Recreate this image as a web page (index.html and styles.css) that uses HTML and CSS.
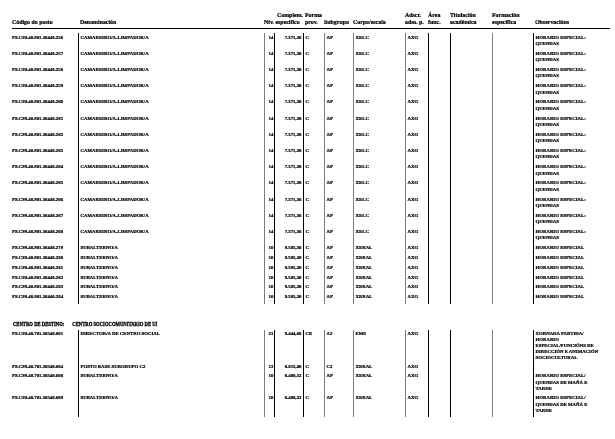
FILE: index.html
```html
<!DOCTYPE html>
<html lang="gl">
<head>
<meta charset="utf-8">
<title>Relación de postos</title>
<link rel="stylesheet" href="styles.css">
</head>
<body>
<div class="page">
<table class="rpt">
<colgroup>
<col class="c1"><col class="c2"><col class="c3"><col class="c4"><col class="c5"><col class="c6"><col class="c7"><col class="c8"><col class="c9"><col class="c10"><col class="c11"><col class="c12">
</colgroup>
<thead>
<tr class="hd">
<th>Código do posto</th>
<th class="pl">Denominación</th>
<th colspan="2" class="hniv"><span class="hcomp">Complem.</span><br>Nív. específico</th>
<th class="pl">Forma<br>prov.</th>
<th>Subgrupo</th>
<th>Corpo/escala</th>
<th>Adscr.<br>adm. p.</th>
<th>Área<br>func.</th>
<th>Titulación<br>académica</th>
<th>Formación<br>específica</th>
<th class="pl">Observacións</th>
</tr>
<tr class="sp"><td colspan="12"></td></tr>
</thead>
<tbody>
<tr><td class="cod">PS.C99.40.901.36440.256</td><td class="den">CAMAREIRO/A-LIMPADOR/A</td><td class="niv">14</td><td class="cmp">7.371,36</td><td class="frm">C</td><td class="sub">AP</td><td class="cor">XELC</td><td class="ads">AXG</td><td class="are"></td><td class="tit"></td><td class="fes"></td><td class="obs">HORARIO ESPECIAL:<br>QUENDAS</td></tr>
<tr><td class="cod">PS.C99.40.901.36440.257</td><td class="den">CAMAREIRO/A-LIMPADOR/A</td><td class="niv">14</td><td class="cmp">7.371,36</td><td class="frm">C</td><td class="sub">AP</td><td class="cor">XELC</td><td class="ads">AXG</td><td class="are"></td><td class="tit"></td><td class="fes"></td><td class="obs">HORARIO ESPECIAL:<br>QUENDAS</td></tr>
<tr><td class="cod">PS.C99.40.901.36440.258</td><td class="den">CAMAREIRO/A-LIMPADOR/A</td><td class="niv">14</td><td class="cmp">7.371,36</td><td class="frm">C</td><td class="sub">AP</td><td class="cor">XELC</td><td class="ads">AXG</td><td class="are"></td><td class="tit"></td><td class="fes"></td><td class="obs">HORARIO ESPECIAL:<br>QUENDAS</td></tr>
<tr><td class="cod">PS.C99.40.901.36440.259</td><td class="den">CAMAREIRO/A-LIMPADOR/A</td><td class="niv">14</td><td class="cmp">7.371,36</td><td class="frm">C</td><td class="sub">AP</td><td class="cor">XELC</td><td class="ads">AXG</td><td class="are"></td><td class="tit"></td><td class="fes"></td><td class="obs">HORARIO ESPECIAL:<br>QUENDAS</td></tr>
<tr><td class="cod">PS.C99.40.901.36440.260</td><td class="den">CAMAREIRO/A-LIMPADOR/A</td><td class="niv">14</td><td class="cmp">7.371,36</td><td class="frm">C</td><td class="sub">AP</td><td class="cor">XELC</td><td class="ads">AXG</td><td class="are"></td><td class="tit"></td><td class="fes"></td><td class="obs">HORARIO ESPECIAL:<br>QUENDAS</td></tr>
<tr><td class="cod">PS.C99.40.901.36440.261</td><td class="den">CAMAREIRO/A-LIMPADOR/A</td><td class="niv">14</td><td class="cmp">7.371,36</td><td class="frm">C</td><td class="sub">AP</td><td class="cor">XELC</td><td class="ads">AXG</td><td class="are"></td><td class="tit"></td><td class="fes"></td><td class="obs">HORARIO ESPECIAL:<br>QUENDAS</td></tr>
<tr><td class="cod">PS.C99.40.901.36440.262</td><td class="den">CAMAREIRO/A-LIMPADOR/A</td><td class="niv">14</td><td class="cmp">7.371,36</td><td class="frm">C</td><td class="sub">AP</td><td class="cor">XELC</td><td class="ads">AXG</td><td class="are"></td><td class="tit"></td><td class="fes"></td><td class="obs">HORARIO ESPECIAL:<br>QUENDAS</td></tr>
<tr><td class="cod">PS.C99.40.901.36440.263</td><td class="den">CAMAREIRO/A-LIMPADOR/A</td><td class="niv">14</td><td class="cmp">7.371,36</td><td class="frm">C</td><td class="sub">AP</td><td class="cor">XELC</td><td class="ads">AXG</td><td class="are"></td><td class="tit"></td><td class="fes"></td><td class="obs">HORARIO ESPECIAL:<br>QUENDAS</td></tr>
<tr><td class="cod">PS.C99.40.901.36440.264</td><td class="den">CAMAREIRO/A-LIMPADOR/A</td><td class="niv">14</td><td class="cmp">7.371,36</td><td class="frm">C</td><td class="sub">AP</td><td class="cor">XELC</td><td class="ads">AXG</td><td class="are"></td><td class="tit"></td><td class="fes"></td><td class="obs">HORARIO ESPECIAL:<br>QUENDAS</td></tr>
<tr><td class="cod">PS.C99.40.901.36440.265</td><td class="den">CAMAREIRO/A-LIMPADOR/A</td><td class="niv">14</td><td class="cmp">7.371,36</td><td class="frm">C</td><td class="sub">AP</td><td class="cor">XELC</td><td class="ads">AXG</td><td class="are"></td><td class="tit"></td><td class="fes"></td><td class="obs">HORARIO ESPECIAL:<br>QUENDAS</td></tr>
<tr><td class="cod">PS.C99.40.901.36440.266</td><td class="den">CAMAREIRO/A-LIMPADOR/A</td><td class="niv">14</td><td class="cmp">7.371,36</td><td class="frm">C</td><td class="sub">AP</td><td class="cor">XELC</td><td class="ads">AXG</td><td class="are"></td><td class="tit"></td><td class="fes"></td><td class="obs">HORARIO ESPECIAL:<br>QUENDAS</td></tr>
<tr><td class="cod">PS.C99.40.901.36440.267</td><td class="den">CAMAREIRO/A-LIMPADOR/A</td><td class="niv">14</td><td class="cmp">7.371,36</td><td class="frm">C</td><td class="sub">AP</td><td class="cor">XELC</td><td class="ads">AXG</td><td class="are"></td><td class="tit"></td><td class="fes"></td><td class="obs">HORARIO ESPECIAL:<br>QUENDAS</td></tr>
<tr><td class="cod">PS.C99.40.901.36440.268</td><td class="den">CAMAREIRO/A-LIMPADOR/A</td><td class="niv">14</td><td class="cmp">7.371,36</td><td class="frm">C</td><td class="sub">AP</td><td class="cor">XELC</td><td class="ads">AXG</td><td class="are"></td><td class="tit"></td><td class="fes"></td><td class="obs">HORARIO ESPECIAL:<br>QUENDAS</td></tr>
<tr><td class="cod">PS.C99.40.901.36440.279</td><td class="den">SUBALTERNO/A</td><td class="niv">10</td><td class="cmp">9.585,30</td><td class="frm">C</td><td class="sub">AP</td><td class="cor">XERAL</td><td class="ads">AXG</td><td class="are"></td><td class="tit"></td><td class="fes"></td><td class="obs">HORARIO ESPECIAL</td></tr>
<tr><td class="cod">PS.C99.40.901.36440.280</td><td class="den">SUBALTERNO/A</td><td class="niv">10</td><td class="cmp">9.585,30</td><td class="frm">C</td><td class="sub">AP</td><td class="cor">XERAL</td><td class="ads">AXG</td><td class="are"></td><td class="tit"></td><td class="fes"></td><td class="obs">HORARIO ESPECIAL</td></tr>
<tr><td class="cod">PS.C99.40.901.36440.281</td><td class="den">SUBALTERNO/A</td><td class="niv">10</td><td class="cmp">9.585,30</td><td class="frm">C</td><td class="sub">AP</td><td class="cor">XERAL</td><td class="ads">AXG</td><td class="are"></td><td class="tit"></td><td class="fes"></td><td class="obs">HORARIO ESPECIAL</td></tr>
<tr><td class="cod">PS.C99.40.901.36440.282</td><td class="den">SUBALTERNO/A</td><td class="niv">10</td><td class="cmp">9.585,30</td><td class="frm">C</td><td class="sub">AP</td><td class="cor">XERAL</td><td class="ads">AXG</td><td class="are"></td><td class="tit"></td><td class="fes"></td><td class="obs">HORARIO ESPECIAL</td></tr>
<tr><td class="cod">PS.C99.40.901.36440.283</td><td class="den">SUBALTERNO/A</td><td class="niv">10</td><td class="cmp">9.585,30</td><td class="frm">C</td><td class="sub">AP</td><td class="cor">XERAL</td><td class="ads">AXG</td><td class="are"></td><td class="tit"></td><td class="fes"></td><td class="obs">HORARIO ESPECIAL</td></tr>
<tr class="last"><td class="cod">PS.C99.40.901.36440.284</td><td class="den">SUBALTERNO/A</td><td class="niv">10</td><td class="cmp">9.585,30</td><td class="frm">C</td><td class="sub">AP</td><td class="cor">XERAL</td><td class="ads">AXG</td><td class="are"></td><td class="tit"></td><td class="fes"></td><td class="obs">HORARIO ESPECIAL</td></tr>
<tr class="sec"><td colspan="12"><span class="sec-txt"><span class="sec-lbl">CENTRO DE DESTINO:</span>CENTRO SOCIOCOMUNITARIO DE UI</span></td></tr>
<tr><td class="cod">PS.C99.40.701.36540.001</td><td class="den">DIRECTOR/A DE CENTRO SOCIAL</td><td class="niv">21</td><td class="cmp">9.444,68</td><td class="frm">CE</td><td class="sub">A2</td><td class="cor">EMS</td><td class="ads">AXG</td><td class="are"></td><td class="tit"></td><td class="fes"></td><td class="obs tight">XORNADA PARTIDA/<br>HORARIO<br>ESPECIAL/FUNCIÓNS DE<br>DIRECCIÓN E ANIMACIÓN<br>SOCIOCULTURAL</td></tr>
<tr class="s2"><td class="cod">PS.C99.40.701.36540.004</td><td class="den">POSTO BASE SUBGRUPO C2</td><td class="niv">12</td><td class="cmp">6.813,80</td><td class="frm">C</td><td class="sub">C2</td><td class="cor">XERAL</td><td class="ads">AXG</td><td class="are"></td><td class="tit"></td><td class="fes"></td><td class="obs"></td></tr>
<tr class="s2"><td class="cod">PS.C99.40.701.36540.008</td><td class="den">SUBALTERNO/A</td><td class="niv">10</td><td class="cmp">6.480,52</td><td class="frm">C</td><td class="sub">AP</td><td class="cor">XERAL</td><td class="ads">AXG</td><td class="are"></td><td class="tit"></td><td class="fes"></td><td class="obs">HORARIO ESPECIAL/<br>QUENDAS DE MAÑÁ E<br>TARDE</td></tr>
<tr class="s2 last"><td class="cod">PS.C99.40.701.36540.009</td><td class="den">SUBALTERNO/A</td><td class="niv">10</td><td class="cmp">6.480,52</td><td class="frm">C</td><td class="sub">AP</td><td class="cor">XERAL</td><td class="ads">AXG</td><td class="are"></td><td class="tit"></td><td class="fes"></td><td class="obs">HORARIO ESPECIAL/<br>QUENDAS DE MAÑÁ E<br>TARDE</td></tr>
</tbody>
</table>
</div>
</body>
</html>
```
FILE: styles.css
```css
html, body {
  margin: 0;
  padding: 0;
  background: #fff;
}
body {
  font-family: "Liberation Serif", "Times New Roman", serif;
  color: #000;
}
.page {
  padding: 12px 5px 0 12px;
  will-change: transform;
}
.rpt {
  width: 598px;
  table-layout: fixed;
  border-collapse: collapse;
  font-weight: bold;
  -webkit-text-stroke: 0.22px #000;
}
.c1 { width: 66px; }
.c2 { width: 186px; }
.c3 { width: 10px; }
.c4 { width: 29px; }
.c5 { width: 21px; }
.c6 { width: 29px; }
.c7 { width: 52px; }
.c8 { width: 23px; }
.c9 { width: 22px; }
.c10 { width: 42px; }
.c11 { width: 41px; }
.c12 { width: 77px; }

.hd th {
  font-size: 5.9px;
  line-height: 7.4px;
  text-align: left;
  vertical-align: bottom;
  white-space: nowrap;
  padding: 0 0 1.5px 0;
  border-bottom: 1.3px solid #000;
}
.hd th.pl { padding-left: 2px; }
.hd th.hniv { padding-left: 0; }
.hcomp { padding-left: 13px; }

.sp td { height: 3.5px; padding: 0; }

tbody td {
  font-size: 4.8px;
  line-height: 6.4px;
  padding: 1.8px 1px 1.6px 2px;
  vertical-align: top;
  white-space: nowrap;
  overflow: visible;
}
tbody tr.last td { padding-bottom: 3px; }
tbody tr.s2 td { padding-top: 1.5px; padding-bottom: 1.2px; }
tbody tr.s2 td.obs { line-height: 6.5px; }
tbody tr.s2.last td { padding-bottom: 2px; }
tbody td.cod { padding-left: 0; }
td.den { border-left: 1px solid #000; }
td.niv { border-left: 1px solid #7c7c7c; padding-left: 4px; }
td.cmp { border-left: 1px solid #000; text-align: right; padding-right: 1px; }
td.frm { border-left: 1px solid #000; }
td.sub { border-left: 1px solid #7c7c7c; }
td.cor { border-left: 1px solid #7c7c7c; }
td.ads { border-left: 1px solid #7c7c7c; }
td.are { border-left: 1px solid #000; }
td.tit { border-left: 1px solid #000; }
td.fes { border-left: 1px solid #7c7c7c; }
td.obs { border-left: 1.4px solid #000; }
td.obs.tight { line-height: 5.9px; }

tbody tr.sec td {
  font-size: 6.4px;
  line-height: 7px;
  padding: 16px 0 3px 1px;
  border: none;
}
.sec-txt {
  display: inline-block;
  transform: scaleX(0.73);
  transform-origin: left center;
  -webkit-text-stroke: 0.35px #000;
}
.sec-lbl { margin-right: 11px; }
```
